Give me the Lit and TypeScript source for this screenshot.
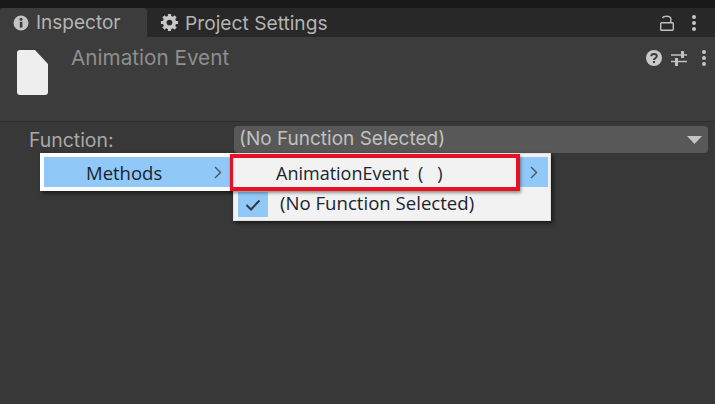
import {css, html, LitElement} from 'lit'
import {customElement} from 'lit/decorators.js'

@customElement('app-root')
export class AppRoot extends LitElement {

    render() {
        return html`
            <div class="strip"></div>
            <div class="tabbar">
                <div class="tab active">
                    <svg class="tab-icon" viewBox="0 0 16 16">
                        <circle cx="8" cy="8" r="7.5" fill="#c4c4c4"/>
                        <rect x="6.8" y="6.8" width="2.6" height="5.8" fill="#3c3c3c"/>
                        <circle cx="8" cy="4.3" r="1.5" fill="#3c3c3c"/>
                    </svg>
                    Inspector
                </div>
                <div class="tab">
                    <svg class="tab-icon gear" viewBox="0 0 20 20">
                        <path d="M10 1v18M1 10h18M3.6 3.6l12.8 12.8M16.4 3.6L3.6 16.4" stroke="#c8c8c8" stroke-width="3.4"/>
                        <circle cx="10" cy="10" r="5.2" fill="none" stroke="#c8c8c8" stroke-width="3.6"/>
                        <circle cx="10" cy="10" r="3" fill="#282828"/>
                    </svg>
                    Project Settings
                </div>
                <div class="tab-tools">
                    <svg width="14" height="16" viewBox="0 0 14 16">
                        <path d="M2.500 3C3.500 .8 10.800 .3 10.800 3.500V7.500" fill="none" stroke="#c0c0c0" stroke-width="1.400"/>
                        <rect x=".7" y="7.700" width="12.600" height="7.500" rx="1" fill="none" stroke="#c0c0c0" stroke-width="1.400"/>
                    </svg>
                    <span class="dots"><i></i><i></i><i></i></span>
                </div>
            </div>
            <div class="header">
                <svg class="file" width="31" height="45" viewBox="0 0 31 45">
                    <path d="M3 0H18L31 14V42A3 3 0 0 1 28 45H3A3 3 0 0 1 0 42V3A3 3 0 0 1 3 0Z" fill="#eeeeee"/>
                </svg>
                <div class="title">Animation Event</div>
                <div class="header-tools">
                    <svg width="16" height="16" viewBox="0 0 16 16">
                        <circle cx="8" cy="8" r="8" fill="#c8c8c8"/>
                        <path d="M5.300 6.200C5.300 3.300 10.800 3.300 10.800 6.200C10.800 8 8 8 8 10" fill="none" stroke="#3c3c3c" stroke-width="2"/>
                        <rect x="7" y="11" width="2" height="2" fill="#3c3c3c"/>
                    </svg>
                    <svg class="sliders" width="16" height="16" viewBox="0 0 16 16">
                        <path d="M0 5H16M0 11.500H16" stroke="#c0c0c0" stroke-width="1.600"/>
                        <rect x="10" y="1" width="3" height="7" fill="#c0c0c0"/>
                        <rect x="4" y="8" width="3" height="8" fill="#c0c0c0"/>
                    </svg>
                    <span class="dots"><i></i><i></i><i></i></span>
                </div>
            </div>
            <div class="body">
                <div class="row">
                    <div class="label">Function:</div>
                    <div class="select">
                        <span>(No Function Selected)</span>
                        <svg width="15" height="8" viewBox="0 0 15 8"><path d="M0 0H15L7.500 8Z" fill="#c4c4c4"/></svg>
                    </div>
                </div>
                <div class="menu methods">
                    <div class="item">
                        <span>Methods</span>
                        <svg class="chev" width="8" height="13" viewBox="0 0 8 13"><path d="M1 1L6.500 6.500L1 12" fill="none" stroke="#4a5560" stroke-width="1.400"/></svg>
                    </div>
                </div>
                <div class="menu functions">
                    <div class="fn-row first">
                        <div class="fn-text first">AnimationEvent<span class="parens">(&nbsp;&nbsp;&nbsp;)</span></div>
                        <div class="fn-arrow">
                            <svg width="8" height="13" viewBox="0 0 8 13"><path d="M1 1L6.500 6.500L1 12" fill="none" stroke="#4a5560" stroke-width="1.400"/></svg>
                        </div>
                    </div>
                    <div class="fn-row second">
                        <div class="check">
                            <svg width="16" height="12" viewBox="0 0 16 12"><path d="M1.500 6L6 10.500L14.500 1.500" fill="none" stroke="#2e3a46" stroke-width="2"/></svg>
                        </div>
                        <div class="fn-text lower">(No Function Selected)</div>
                    </div>
                </div>
                <div class="highlight"></div>
            </div>
        `
    }

    static styles = css`
      :host {
        display: block;
        width: 715px;
        height: 404px;
        overflow: hidden;
        background: #383838;
        font-family: Inter, sans-serif;
      }

      .strip {
        height: 8px;
        background: #191919;
      }

      .tabbar {
        height: 29px;
        display: flex;
        background: #282828;
      }

      .tab {
        display: flex;
        align-items: center;
        gap: 7px;
        padding-left: 13px;
        width: 134px;
        font-size: 19px;
        color: #b4b4b4;
      }

      .tab.active {
        background: #3c3c3c;
        border-radius: 3px 3px 0 0;
      }

      .tab + .tab {
        width: auto;
        gap: 6px;
        font-size: 19.2px;
      }

      .tab-icon {
        width: 16px;
        height: 16px;
        flex: none;
      }

      .gear {
        width: 19px;
        height: 19px;
      }

      .tab-tools {
        margin-left: auto;
        display: flex;
        align-items: center;
        gap: 18px;
        padding-right: 19px;
      }

      .dots {
        display: flex;
        flex-direction: column;
        gap: 2px;
      }

      .dots i {
        width: 4px;
        height: 4px;
        border-radius: 50%;
        background: #c4c4c4;
      }

      .header {
        height: 85px;
        box-sizing: border-box;
        display: flex;
        align-items: flex-start;
        padding: 13px 9px 0 17px;
        background: #3c3c3c;
        border-bottom: 1px solid #2c2c2c;
      }

      .title {
        margin-left: 23px;
        margin-top: -5px;
        font-size: 20.700px;
        color: #8e8e8e;
      }

      .header-tools {
        margin-left: auto;
        display: flex;
        align-items: center;
        gap: 9px;
      }

      .sliders {
        margin-right: 6px;
      }

      .body {
        position: relative;
        height: 282px;
      }

      .row {
        display: flex;
        align-items: center;
        padding: 4px 7px 0 29px;
      }

      .label {
        width: 205px;
        font-size: 19.400px;
        color: #a8a8a8;
      }

      .select {
        flex: 1;
        height: 27px;
        display: flex;
        align-items: center;
        justify-content: space-between;
        padding: 0 6px 0 5px;
        background: #585858;
        border-radius: 4px;
        font-size: 19px;
        color: #c0c0c0;
      }

      .select span {
        margin-top: -2px;
      }

      .menu {
        position: absolute;
        box-sizing: border-box;
        background: #f2f2f2;
        font-family: "Open Sans", sans-serif;
        font-size: 18.500px;
        color: #1a2430;
        box-shadow: 2px 2px 4px rgba(0, 0, 0, 0.6);
      }

      .methods {
        left: 40px;
        top: 31px;
        width: 194px;
        height: 38px;
        padding: 4px;
        background: #ffffff;
      }

      .item {
        height: 30px;
        display: flex;
        align-items: center;
        padding-left: 42px;
        background: #90c8f8;
      }

      .chev {
        margin-left: auto;
        margin-right: 8px;
      }

      .functions {
        left: 233px;
        top: 31px;
        width: 318px;
        height: 68px;
        padding: 3px 2px 3px 4px;
        border: 1px solid #e0e0e0;
      }

      .fn-row.first {
        height: 30px;
        display: flex;
        align-items: center;
      }

      .fn-row.second {
        height: 25px;
        margin-top: 5px;
        display: flex;
        align-items: center;
      }

      .fn-text {
        flex: 1;
        padding-left: 12px;
      }

      .fn-text.first {
        padding-left: 38px;
        padding-top: 2px;
        font-size: 18px;
      }

      .fn-text.lower {
        font-size: 18.600px;
        padding-bottom: 4px;
      }

      .parens {
        margin-left: 9px;
      }

      .fn-arrow {
        width: 28px;
        height: 100%;
        display: flex;
        align-items: center;
        justify-content: center;
        background: #90c8f8;
      }

      .check {
        width: 30px;
        height: 100%;
        display: flex;
        align-items: center;
        justify-content: center;
        background: #90c8f8;
      }

      .highlight {
        position: absolute;
        left: 230px;
        top: 32px;
        width: 290px;
        height: 37px;
        box-sizing: border-box;
        border: 4px solid #e81123;
        border-left-width: 3px;
        box-shadow: 1px 2px 3px rgba(0, 0, 0, 0.4);
      }
    `
}

declare global {
    interface HTMLElementTagNameMap {
        'app-root': AppRoot
    }
}
